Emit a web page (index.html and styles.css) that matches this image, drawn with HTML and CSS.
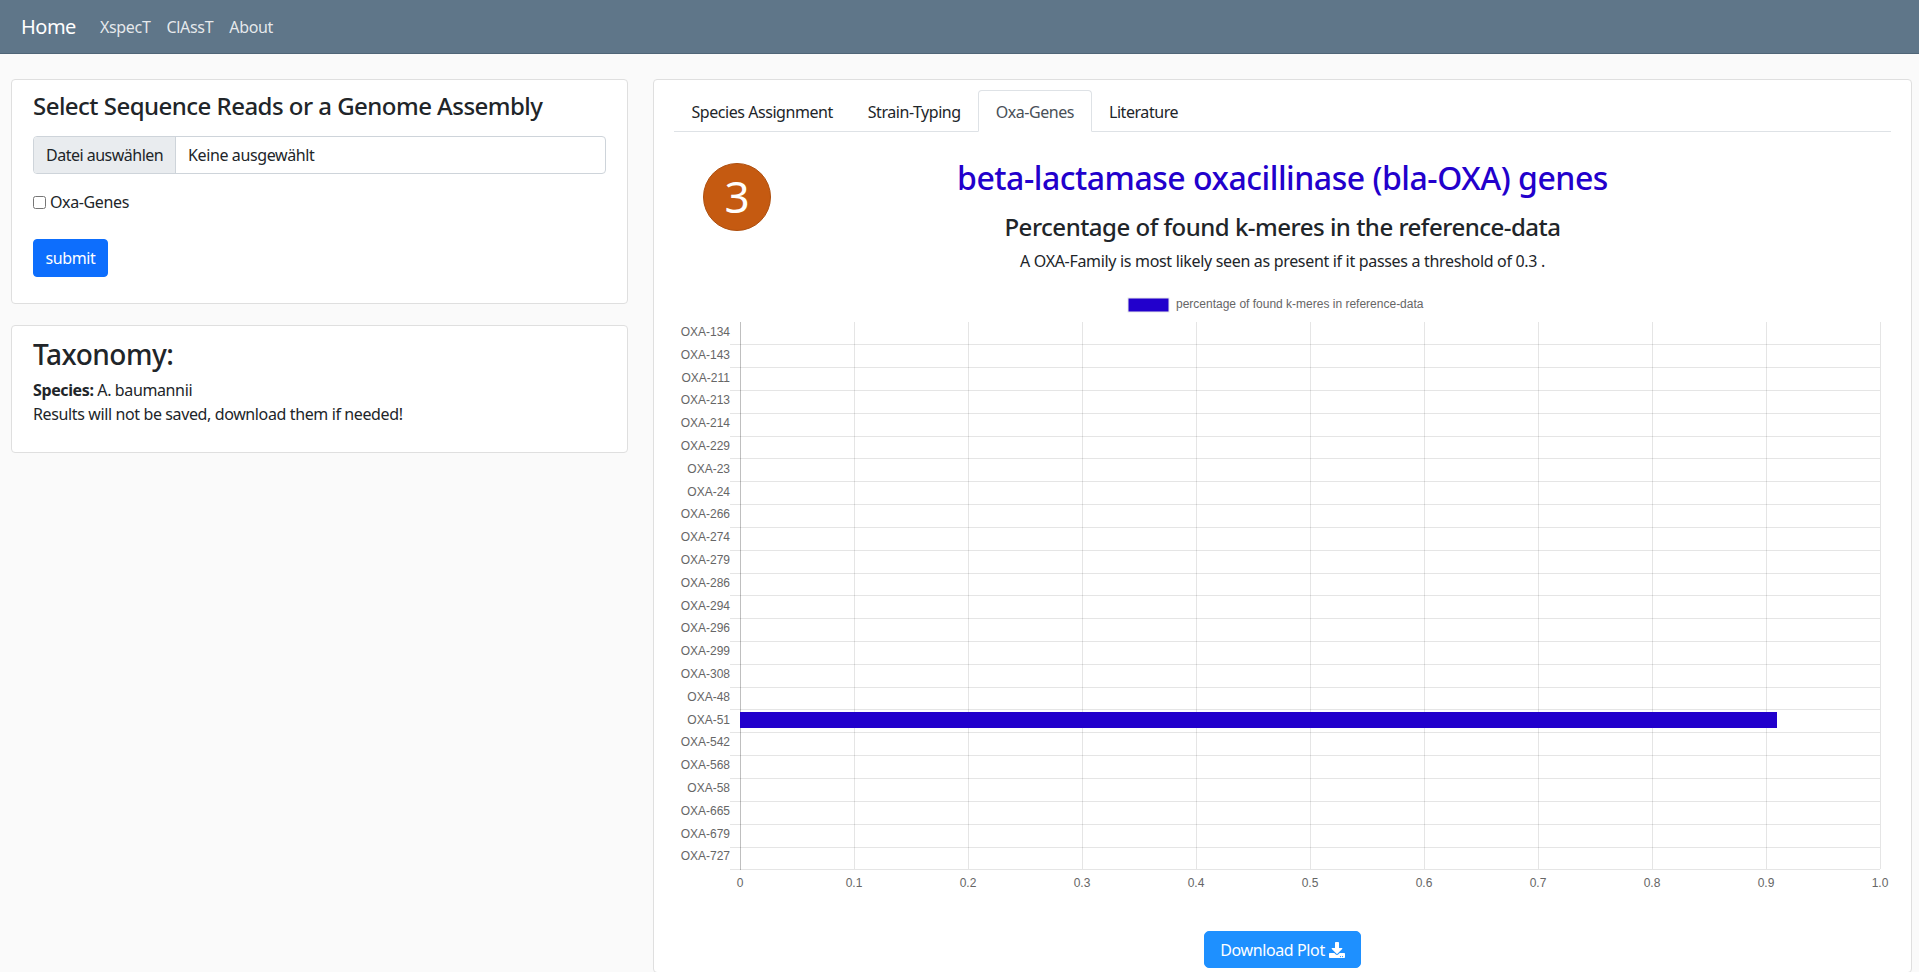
FILE: index.html
```html
<!DOCTYPE html>
<html lang="en">
<head>
<meta charset="utf-8">
<title>XspecT - Oxa-Genes</title>
<link rel="stylesheet" href="styles.css">
</head>
<body>
<nav class="navbar">
  <a class="brand" href="#">Home</a>
  <a class="nav-link" href="#">XspecT</a>
  <a class="nav-link" href="#">ClAssT</a>
  <a class="nav-link" href="#">About</a>
</nav>
<main class="layout">
  <div class="side">
    <section class="card card-upload">
      <h4 class="upload-title">Select Sequence Reads or a Genome Assembly</h4>
      <div class="file-input">
        <span class="file-button">Datei auswählen</span>
        <span class="file-name">Keine ausgewählt</span>
      </div>
      <label class="check"><input type="checkbox" class="check-box"><span>Oxa-Genes</span></label>
      <button class="btn-submit" type="button">submit</button>
    </section>
    <section class="card card-taxonomy">
      <h3 class="tax-title">Taxonomy:</h3>
      <p class="tax-line"><strong>Species:</strong> A. baumannii</p>
      <p class="tax-line">Results will not be saved, download them if needed!</p>
    </section>
  </div>
  <section class="card card-results">
    <ul class="tabs">
      <li class="tab">Species Assignment</li>
      <li class="tab">Strain-Typing</li>
      <li class="tab tab-active">Oxa-Genes</li>
      <li class="tab">Literature</li>
    </ul>
    <div class="head">
      <div class="badge">3</div>
      <h2 class="head-title">beta-lactamase oxacillinase (bla-OXA) genes</h2>
      <h4 class="head-sub">Percentage of found k-meres in the reference-data</h4>
      <p class="head-note">A OXA-Family is most likely seen as present if it passes a threshold of 0.3 .</p>
    </div>
    <svg class="chart" viewBox="674 290 1217 610" width="1217" height="610" xmlns="http://www.w3.org/2000/svg">
      <rect class="legend-box" x="1128" y="298" width="41" height="14"/>
      <text class="legend-text" x="1176" y="308">percentage of found k-meres in reference-data</text>
      <g class="grid">
        <path d="M854.5 322V869M968.5 322V869M1082.5 322V869M1196.5 322V869M1310.5 322V869M1424.5 322V869M1538.5 322V869M1652.5 322V869M1766.5 322V869M1880.5 322V869"/>
        <path d="M730 344.5H1880M730 367.5H1880M730 390.5H1880M730 413.5H1880M730 436.5H1880M730 458.5H1880M730 481.5H1880M730 504.5H1880M730 527.5H1880M730 550.5H1880M730 573.5H1880M730 595.5H1880M730 618.5H1880M730 641.5H1880M730 664.5H1880M730 687.5H1880M730 709.5H1880M730 732.5H1880M730 755.5H1880M730 778.5H1880M730 801.5H1880M730 824.5H1880M730 847.5H1880M730 869.5H1880"/>
      </g>
      <path class="axis" d="M740.5 322V870"/>
      <rect class="bar" x="740" y="712" width="1037" height="16"/>
      <g class="y-labels">
        <text x="730" y="336">OXA-134</text>
        <text x="730" y="358.800">OXA-143</text>
        <text x="730" y="381.600">OXA-211</text>
        <text x="730" y="404.400">OXA-213</text>
        <text x="730" y="427.200">OXA-214</text>
        <text x="730" y="450">OXA-229</text>
        <text x="730" y="472.800">OXA-23</text>
        <text x="730" y="495.600">OXA-24</text>
        <text x="730" y="518.400">OXA-266</text>
        <text x="730" y="541.200">OXA-274</text>
        <text x="730" y="564">OXA-279</text>
        <text x="730" y="586.800">OXA-286</text>
        <text x="730" y="609.600">OXA-294</text>
        <text x="730" y="632.400">OXA-296</text>
        <text x="730" y="655.200">OXA-299</text>
        <text x="730" y="678">OXA-308</text>
        <text x="730" y="700.800">OXA-48</text>
        <text x="730" y="723.600">OXA-51</text>
        <text x="730" y="746.400">OXA-542</text>
        <text x="730" y="769.200">OXA-568</text>
        <text x="730" y="792">OXA-58</text>
        <text x="730" y="814.800">OXA-665</text>
        <text x="730" y="837.600">OXA-679</text>
        <text x="730" y="860.400">OXA-727</text>
      </g>
      <g class="x-labels">
        <text x="740" y="887">0</text>
        <text x="854" y="887">0.1</text>
        <text x="968" y="887">0.2</text>
        <text x="1082" y="887">0.3</text>
        <text x="1196" y="887">0.4</text>
        <text x="1310" y="887">0.5</text>
        <text x="1424" y="887">0.6</text>
        <text x="1538" y="887">0.7</text>
        <text x="1652" y="887">0.8</text>
        <text x="1766" y="887">0.9</text>
        <text x="1880" y="887">1.0</text>
      </g>
    </svg>
    <div class="download-row">
      <button class="btn-download" type="button">Download Plot
        <svg class="download-icon" viewBox="0 0 512 512" xmlns="http://www.w3.org/2000/svg"><path d="M216 0h80c13.300 0 24 10.700 24 24v168h87.700c17.800 0 26.700 21.500 14.100 34.100L269.700 378.300c-7.500 7.500-19.800 7.500-27.300 0L90.100 226.100c-12.600-12.600-3.700-34.100 14.100-34.100H192V24c0-13.300 10.700-24 24-24zm296 376v112c0 13.300-10.700 24-24 24H24c-13.300 0-24-10.700-24-24V376c0-13.300 10.700-24 24-24h146.700l49 49c20.100 20.100 52.500 20.100 72.600 0l49-49H488c13.300 0 24 10.700 24 24zm-124 88c0-11-9-20-20-20s-20 9-20 20 9 20 20 20 20-9 20-20zm64 0c0-11-9-20-20-20s-20 9-20 20 9 20 20 20 20-9 20-20z"/></svg>
      </button>
    </div>
  </section>
</main>
</body>
</html>
```
FILE: styles.css
```css
* { box-sizing: border-box; }
html, body { margin: 0; padding: 0; height: 972px; overflow: hidden; }
body {
  background: #fafafa;
  color: #212529;
  font-family: "Noto Sans", "Open Sans", sans-serif;
  font-size: 16px;
  line-height: 24px;
  letter-spacing: -0.38px;
}
.navbar {
  display: flex;
  align-items: center;
  height: 54px;
  padding: 0 0 0 21px;
  background: #5f7689;
  border-bottom: 1px solid #4f6577;
}
.brand { color: #fff; font-size: 20px; text-decoration: none; margin-right: 24px; letter-spacing: -0.5px; }
.nav-link { color: rgba(255,255,255,.85); text-decoration: none; margin-right: 16px; letter-spacing: -0.32px; }
.layout {
  display: grid;
  grid-template-columns: 617px 1259px;
  column-gap: 25px;
  padding: 25px 0 0 11px;
  align-items: start;
}
.side { display: flex; flex-direction: column; gap: 21px; }
.card {
  background: #fff;
  border: 1px solid #dfdfdf;
  border-radius: 4px;
}
.card-upload { height: 225px; padding: 11px 21px 0; }
.upload-title { margin: 0 0 16px; font-size: 24px; line-height: 29px; font-weight: 500; letter-spacing: -0.53px; }
.file-input {
  display: flex;
  height: 38px;
  border: 1px solid #ced4da;
  border-radius: 4px;
  overflow: hidden;
  background: #fff;
}
.file-button {
  display: flex;
  align-items: center;
  padding: 0 12px;
  width: 142px;
  margin-right: -1px;
  background: #e9ecef;
  border-right: 1px solid #ced4da;
  white-space: nowrap;
  letter-spacing: -0.5px;
}
.file-name { display: flex; align-items: center; padding-left: 13px; }
.check { display: flex; align-items: center; margin-top: 16px; height: 24px; }
.check-box { width: 13px; height: 13px; margin: 0 4px 0 0; }
.btn-submit {
  display: block;
  margin-top: 25px;
  width: 75px;
  height: 38px;
  padding: 0;
  background: #0d6efd;
  border: 1px solid #0d6efd;
  border-radius: 4px;
  color: #fff;
  font: inherit;
  letter-spacing: inherit;
}
.card-taxonomy { height: 128px; padding: 11px 21px 0; }
.tax-title { margin: 0 0 7px; font-size: 28px; line-height: 34px; font-weight: 500; letter-spacing: -0.5px; }
.tax-line { margin: 0; }
.card-results { height: 894px; padding: 10px 20px 0; }
.tabs {
  display: flex;
  list-style: none;
  margin: 0;
  padding: 0;
  height: 42px;
  border-bottom: 1px solid #dee2e6;
}
.tab {
  height: 42px;
  padding: 9px 16.500px 0;
  border: 1px solid transparent;
  border-radius: 4px 4px 0 0;
  letter-spacing: -0.45px;
}
.tab-active {
  color: #495057;
  background: #fff;
  border-color: #dee2e6 #dee2e6 #fff;
}
.head { position: relative; text-align: center; padding-top: 26px; height: 158px; }
.badge {
  position: absolute;
  left: 29px;
  top: 31px;
  width: 68px;
  height: 68px;
  border-radius: 50%;
  background: #c55a11;
  border: 1px solid #ae4f0f;
  color: #fff;
  font-size: 44px;
  line-height: 64px;
}
.head-title { margin: 0; color: #2200cc; font-size: 32px; line-height: 40px; font-weight: 500; letter-spacing: -0.47px; }
.head-sub { margin: 14px 0 0; font-size: 24px; line-height: 29px; font-weight: 500; letter-spacing: -0.5px; }
.head-note { margin: 8px 0 0; letter-spacing: -0.32px; }
.chart { display: block; }
.legend-box { fill: #2200cc; stroke: #e8e8e8; stroke-width: 1; }
.legend-text, .y-labels text, .x-labels text {
  font-family: "Liberation Sans", Arial, sans-serif;
  font-size: 12px;
  letter-spacing: 0;
  fill: #666;
}
.y-labels text { text-anchor: end; }
.x-labels text { text-anchor: middle; }
.grid path { fill: none; stroke: #000; stroke-opacity: .1; stroke-width: 1; }
.axis { fill: none; stroke: #000; stroke-opacity: .25; stroke-width: 1; }
.bar { fill: #2200cc; }
.download-row { display: flex; justify-content: center; margin-top: 31px; }
.btn-download {
  display: flex;
  align-items: center;
  gap: 4px;
  justify-content: center;
  width: 157px;
  height: 37px;
  padding: 0;
  background: #1e90ff;
  border: 1px solid #1e90ff;
  border-radius: 5px;
  color: #fff;
  font: inherit;
  letter-spacing: inherit;
}
.download-icon { width: 16px; height: 16px; fill: #fff; }
```
